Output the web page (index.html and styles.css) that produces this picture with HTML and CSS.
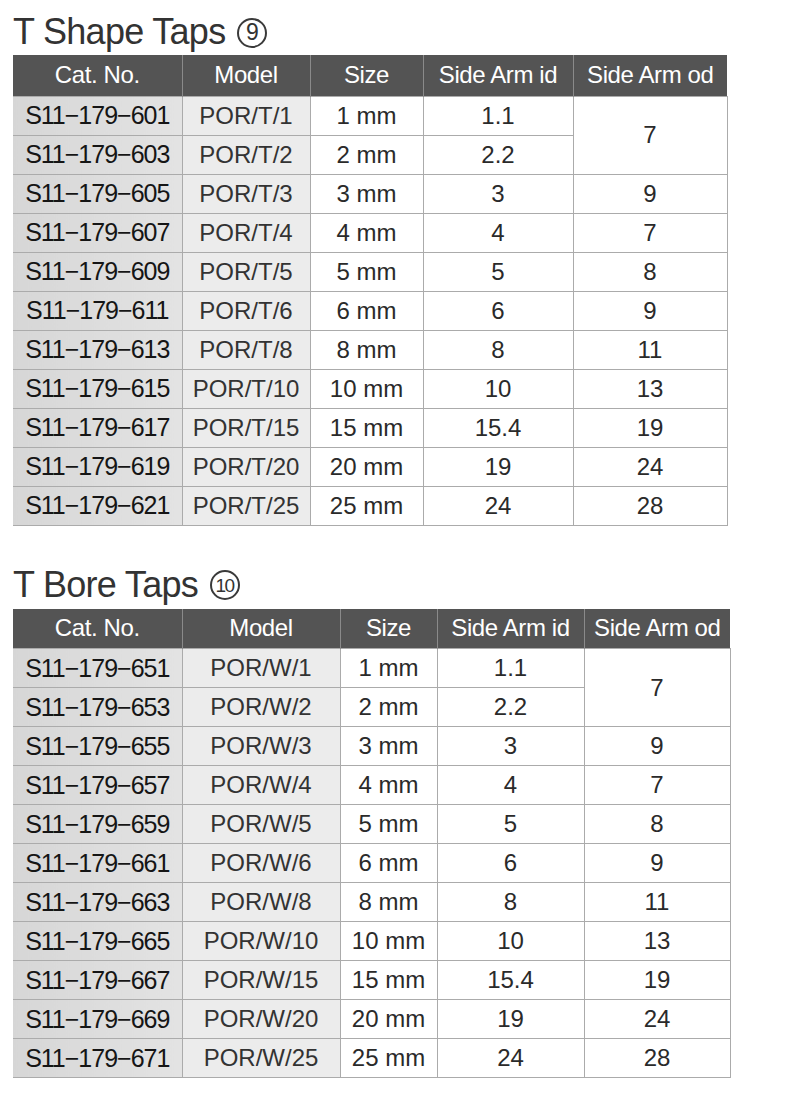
FILE: index.html
```html
<!DOCTYPE html>
<html lang="en">
<head>
<meta charset="utf-8">
<title>T Shape Taps / T Bore Taps</title>
<link rel="stylesheet" href="styles.css">
</head>
<body>
<section class="block">
  <h2 class="title">T Shape Taps <span class="circ">9</span></h2>
  <table class="spec spec-a">
    <colgroup><col class="c1"><col class="c2"><col class="c3"><col class="c4"><col class="c5"></colgroup>
    <thead>
      <tr><th>Cat. No.</th><th>Model</th><th>Size</th><th>Side Arm id</th><th>Side Arm od</th></tr>
    </thead>
    <tbody>
      <tr><td class="cat">S11−179−601</td><td class="model">POR/T/1</td><td>1 mm</td><td>1.1</td><td rowspan="2">7</td></tr>
      <tr><td class="cat">S11−179−603</td><td class="model">POR/T/2</td><td>2 mm</td><td>2.2</td></tr>
      <tr><td class="cat">S11−179−605</td><td class="model">POR/T/3</td><td>3 mm</td><td>3</td><td>9</td></tr>
      <tr><td class="cat">S11−179−607</td><td class="model">POR/T/4</td><td>4 mm</td><td>4</td><td>7</td></tr>
      <tr><td class="cat">S11−179−609</td><td class="model">POR/T/5</td><td>5 mm</td><td>5</td><td>8</td></tr>
      <tr><td class="cat">S11−179−611</td><td class="model">POR/T/6</td><td>6 mm</td><td>6</td><td>9</td></tr>
      <tr><td class="cat">S11−179−613</td><td class="model">POR/T/8</td><td>8 mm</td><td>8</td><td>11</td></tr>
      <tr><td class="cat">S11−179−615</td><td class="model">POR/T/10</td><td>10 mm</td><td>10</td><td>13</td></tr>
      <tr><td class="cat">S11−179−617</td><td class="model">POR/T/15</td><td>15 mm</td><td>15.4</td><td>19</td></tr>
      <tr><td class="cat">S11−179−619</td><td class="model">POR/T/20</td><td>20 mm</td><td>19</td><td>24</td></tr>
      <tr><td class="cat">S11−179−621</td><td class="model">POR/T/25</td><td>25 mm</td><td>24</td><td>28</td></tr>
    </tbody>
  </table>
</section>

<section class="block block-b">
  <h2 class="title">T Bore Taps <span class="circ circ-2">10</span></h2>
  <table class="spec spec-b">
    <colgroup><col class="c1"><col class="c2"><col class="c3"><col class="c4"><col class="c5"></colgroup>
    <thead>
      <tr><th>Cat. No.</th><th>Model</th><th>Size</th><th>Side Arm id</th><th>Side Arm od</th></tr>
    </thead>
    <tbody>
      <tr><td class="cat">S11−179−651</td><td class="model">POR/W/1</td><td>1 mm</td><td>1.1</td><td rowspan="2">7</td></tr>
      <tr><td class="cat">S11−179−653</td><td class="model">POR/W/2</td><td>2 mm</td><td>2.2</td></tr>
      <tr><td class="cat">S11−179−655</td><td class="model">POR/W/3</td><td>3 mm</td><td>3</td><td>9</td></tr>
      <tr><td class="cat">S11−179−657</td><td class="model">POR/W/4</td><td>4 mm</td><td>4</td><td>7</td></tr>
      <tr><td class="cat">S11−179−659</td><td class="model">POR/W/5</td><td>5 mm</td><td>5</td><td>8</td></tr>
      <tr><td class="cat">S11−179−661</td><td class="model">POR/W/6</td><td>6 mm</td><td>6</td><td>9</td></tr>
      <tr><td class="cat">S11−179−663</td><td class="model">POR/W/8</td><td>8 mm</td><td>8</td><td>11</td></tr>
      <tr><td class="cat">S11−179−665</td><td class="model">POR/W/10</td><td>10 mm</td><td>10</td><td>13</td></tr>
      <tr><td class="cat">S11−179−667</td><td class="model">POR/W/15</td><td>15 mm</td><td>15.4</td><td>19</td></tr>
      <tr><td class="cat">S11−179−669</td><td class="model">POR/W/20</td><td>20 mm</td><td>19</td><td>24</td></tr>
      <tr><td class="cat">S11−179−671</td><td class="model">POR/W/25</td><td>25 mm</td><td>24</td><td>28</td></tr>
    </tbody>
  </table>
</section>
</body>
</html>
```

FILE: styles.css
```css
* { box-sizing: border-box; }

html, body {
  margin: 0;
  padding: 0;
  background: #ffffff;
}

body {
  font-family: "Liberation Sans", Arial, sans-serif;
  color: #2a2a2a;
  padding-left: 13px;
}

.block {
  padding-top: 12px;
}

.block-b {
  padding-top: 39px;
}

.title {
  margin: 0 0 3px 0;
  height: 40px;
  line-height: 40px;
  font-size: 36px;
  font-weight: normal;
  letter-spacing: -0.7px;
  color: #333333;
  display: flex;
  align-items: center;
  gap: 12px;
  white-space: nowrap;
}

.block-b .title {
  margin-bottom: 4px;
}

.circ {
  display: inline-flex;
  align-items: center;
  justify-content: center;
  width: 30px;
  height: 30px;
  margin-top: 1px;
  border: 2px solid #3a3a3a;
  border-radius: 50%;
  font-size: 23px;
  line-height: 1;
  letter-spacing: 0;
  color: #333333;
}

.circ-2 {
  font-size: 19px;
  letter-spacing: -1.5px;
  padding-right: 1px;
}

.spec {
  border-collapse: collapse;
  table-layout: fixed;
}

.spec-a { width: 714px; }
.spec-b { width: 717px; }

.spec-a .c1 { width: 169px; }
.spec-a .c2 { width: 128px; }
.spec-a .c3 { width: 113px; }
.spec-a .c4 { width: 150px; }
.spec-a .c5 { width: 154px; }

.spec-b .c1 { width: 169px; }
.spec-b .c2 { width: 158px; }
.spec-b .c3 { width: 97px; }
.spec-b .c4 { width: 147px; }
.spec-b .c5 { width: 146px; }

.spec th {
  height: 41px;
  padding: 0;
  background: #545454;
  color: #ffffff;
  font-weight: normal;
  font-size: 24px;
  letter-spacing: -0.4px;
  text-align: center;
  border-left: 1px solid #8a8a8a;
  white-space: nowrap;
}

.spec-b th { height: 40px; }

.spec th:first-child { border-left: none; }

.spec td {
  height: 39px;
  padding: 0;
  font-size: 24px;
  color: #2a2a2a;
  text-align: center;
  vertical-align: middle;
  border: 1px solid #ababab;
  background: #ffffff;
  white-space: nowrap;
}

.spec td.cat {
  font-size: 25px;
  letter-spacing: -1px;
  color: #151515;
  background: linear-gradient(to right, #d6d6d6, #e3e3e3);
  border-left: none;
}

.spec td.model {
  background: #ececec;
  color: #333333;
}
```
